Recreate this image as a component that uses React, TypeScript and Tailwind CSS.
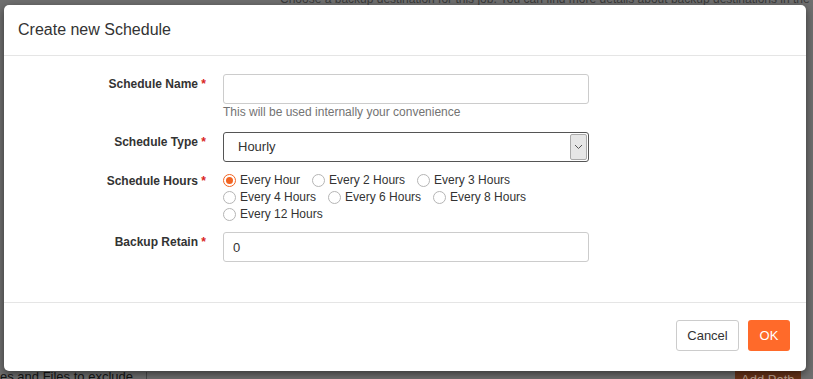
import { useState } from "react";

// "Create new Schedule" modal over a dimmed settings page.
const HOURS = [
  "Every Hour",
  "Every 2 Hours",
  "Every 3 Hours",
  "Every 4 Hours",
  "Every 6 Hours",
  "Every 8 Hours",
  "Every 12 Hours",
];

function Label({ text }: { text: string }) {
  return (
    <label className="w-[202px] shrink-0 pt-[1px] text-right text-[12px] font-bold text-[#333]">
      {text} <span className="text-[#d9251d]">*</span>
    </label>
  );
}

export default function App() {
  const [hours, setHours] = useState("Every Hour");

  return (
    <div
      className="relative h-[379px] w-[813px] overflow-hidden bg-[#6f6f6f]"
      style={{ fontFamily: '"Liberation Sans", Arial, sans-serif' }}
    >
      {/* page behind the backdrop */}
      <div className="absolute left-[280px] top-[-10px] whitespace-nowrap text-[12px] text-[#3a3a3a]">
        Choose a backup destination for this job. You can find more details about backup destinations in the following link
      </div>
      <div className="absolute left-0 top-[367px] whitespace-nowrap text-[13px] text-[#141414]">
        es and Files to exclude
      </div>
      <div className="absolute left-[146px] top-[372px] h-[10px] w-px bg-[#4a4a4a]" />
      <div className="absolute left-[735px] top-[371px] h-[12px] w-[66px] bg-[#6a3419] pl-[6px] pt-[2px] text-[13px] leading-[13px] text-[#bfa393]">
        Add Path
      </div>

      {/* modal */}
      <div className="absolute left-[4px] top-[5px] flex h-[366px] w-[802px] flex-col rounded-[5px] bg-white shadow-[0_3px_9px_rgba(0,0,0,0.5)]">
        <div className="flex h-[51px] items-center border-b border-[#e5e5e5] px-[14px]">
          <h4 className="text-[16px] text-[#333]">Create new Schedule</h4>
        </div>

        <div className="flex flex-1 flex-col pt-[18px]">
          <div className="flex gap-[17px]">
            <Label text="Schedule Name" />
            <div className="w-[366px]">
              <input className="h-[30px] w-full rounded-[3px] border border-[#ccc] px-[10px] text-[13px] outline-none" />
              <p className="mt-[1px] text-[12px] leading-[14px] text-[#737373]">
                This will be used internally your convenience
              </p>
            </div>
          </div>

          <div className="mt-[13px] flex gap-[17px]">
            <Label text="Schedule Type" />
            <div className="flex h-[30px] w-[366px] items-center rounded-[3px] border border-[#555] pl-[14px] text-[13px] text-[#333]">
              <span className="flex-1">Hourly</span>
              <span className="mr-px flex h-[26px] w-[17px] items-center justify-center rounded-[2px] border border-[#aaa] bg-[#e6e6e6]">
                <svg width="9" height="6" viewBox="0 0 9 6" fill="none">
                  <path d="M1 1l3.5 3.5L8 1" stroke="#555" strokeWidth="1" />
                </svg>
              </span>
            </div>
          </div>

          <div className="mt-[9px] flex gap-[17px]">
            <Label text="Schedule Hours" />
            <div className="flex w-[366px] flex-wrap gap-x-[12px] pt-px text-[12px] leading-[17px] text-[#333]">
              {HOURS.map((h) => (
                <button
                  key={h}
                  onClick={() => setHours(h)}
                  className="flex items-center gap-[4px]"
                >
                  <span
                    className={
                      h === hours
                        ? "flex h-[13px] w-[13px] items-center justify-center rounded-full border border-[#f26422] bg-white"
                        : "h-[13px] w-[13px] rounded-full border border-[#b5b5b5] bg-white"
                    }
                  >
                    {h === hours && (
                      <span className="h-[7px] w-[7px] rounded-full bg-[#f26422]" />
                    )}
                  </span>
                  {h}
                </button>
              ))}
            </div>
          </div>

          <div className="mt-[9px] flex gap-[17px]">
            <Label text="Backup Retain" />
            <input
              defaultValue="0"
              className="h-[30px] w-[366px] rounded-[3px] border border-[#ccc] px-[9px] text-[13px] text-[#333] outline-none"
            />
          </div>
        </div>

        <div className="flex h-[69px] items-start justify-end gap-[9px] border-t border-[#e5e5e5] pr-[16px] pt-[17px]">
          <button className="h-[31px] w-[63px] rounded-[3px] border border-[#ccc] bg-white text-[13px] text-[#333]">
            Cancel
          </button>
          <button className="h-[31px] w-[42px] rounded-[3px] bg-[#ff6a2a] text-[13px] text-white">
            OK
          </button>
        </div>
      </div>
    </div>
  );
}
